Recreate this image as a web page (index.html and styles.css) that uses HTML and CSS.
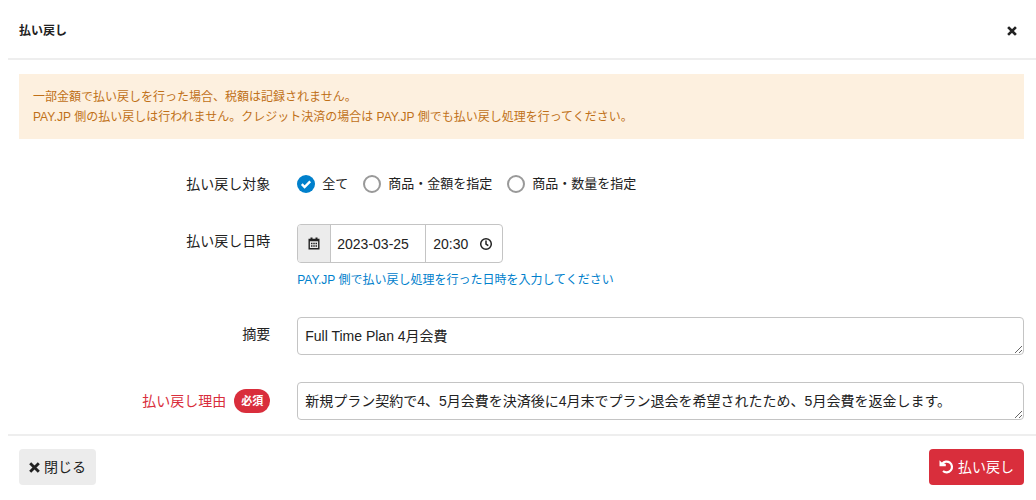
FILE: index.html
```html
<!DOCTYPE html>
<html lang="ja">
<head>
  <meta charset="UTF-8" />
  <meta name="viewport" content="width=device-width, initial-scale=1.0" />
  <title>払い戻し</title>
  <link rel="stylesheet" href="styles.css">
</head>
<body>
  <form class="modal">
    <header class="modal-header">
      <h1>払い戻し</h1>
      <button type="button" class="close" aria-label="閉じる">
        <svg width="10" height="10" viewBox="0 0 10 10"><path d="M2 2l6 6M8 2l-6 6" stroke="currentColor" stroke-width="2.6" stroke-linecap="square"/></svg>
      </button>
    </header>
    <main class="modal-body">
      <div class="alert">
        一部金額で払い戻しを行った場合、税額は記録されません。<br>
        PAY.JP 側の払い戻しは行われません。クレジット決済の場合は PAY.JP 側でも払い戻し処理を行ってください。
      </div>
      <div class="row" role="radiogroup" aria-labelledby="target-label">
        <span class="row-label" id="target-label">払い戻し対象</span>
        <div class="radios">
          <label class="radio"><input type="radio" name="target" value="all" checked>全て</label>
          <label class="radio"><input type="radio" name="target" value="amount">商品・金額を指定</label>
          <label class="radio"><input type="radio" name="target" value="quantity">商品・数量を指定</label>
        </div>
      </div>
      <div class="row">
        <label class="row-label" for="refund-date">払い戻し日時</label>
        <div>
          <div class="date-group">
            <span class="addon">
              <svg width="12" height="13" viewBox="0 0 12 13" fill="none" stroke="currentColor">
                <path d="M1 3.5h10M1.2 2.5h9.6v9.3H1.2z" stroke-width="1.4"/>
                <path d="M3.5 .5v2.5M8.5 .5v2.5" stroke-width="2"/>
                <path d="M3 6.5h6M3 9h6" stroke-width="1.4" stroke-dasharray="1.5 .75"/>
              </svg>
            </span>
            <input type="text" class="date" id="refund-date" name="date" value="2023-03-25">
            <span class="time-box">
              <input type="text" class="time" name="time" value="20:30" aria-label="時刻">
              <svg width="14" height="14" viewBox="0 0 14 14" fill="none" stroke="currentColor" stroke-width="1.5"><circle cx="7" cy="7" r="5.3"/><path d="M7 3.5V7l2.3 1.7"/></svg>
            </span>
          </div>
          <p class="help">PAY.JP 側で払い戻し処理を行った日時を入力してください</p>
        </div>
      </div>
      <div class="row">
        <label class="row-label" for="summary">摘要</label>
        <textarea id="summary" name="summary" rows="1">Full Time Plan 4月会費</textarea>
      </div>
      <div class="row">
        <label class="row-label required" for="reason">払い戻し理由 <span class="badge">必須</span></label>
        <textarea id="reason" name="reason" rows="1" required>新規プラン契約で4、5月会費を決済後に4月末でプラン退会を希望されたため、5月会費を返金します。</textarea>
      </div>
    </main>
    <footer class="modal-footer">
      <button type="button" class="btn">
        <svg width="11" height="11" viewBox="0 0 10 10"><path d="M2 2l6 6M8 2l-6 6" stroke="currentColor" stroke-width="2.6" stroke-linecap="square"/></svg>
        閉じる
      </button>
      <button type="submit" class="btn btn-danger">
        <svg width="15" height="14" viewBox="0 0 15 14" fill="none"><path d="M3.2 3.8A5.4 5.4 0 1 1 4 11" stroke="currentColor" stroke-width="2.2"/><path d="M.5 .3l2 1.9L6.8 4v2.2H.5z" fill="currentColor"/></svg>
        払い戻し
      </button>
    </footer>
  </form>
</body>
</html>
```
FILE: styles.css
```css
* {
  box-sizing: border-box;
}

body {
  margin: 0;
  background: #fff;
  color: #222;
  font-family: "Liberation Sans", "Noto Sans CJK JP", sans-serif;
  font-size: 14px;
  line-height: 20px;
}

input, textarea, button {
  font: inherit;
  color: inherit;
}

svg {
  display: block;
  flex: none;
}

.modal {
  margin-left: 8px;
}

.modal-header {
  display: flex;
  align-items: center;
  justify-content: space-between;
  height: 60px;
  padding: 4px 12px 0 11px;
  border-bottom: 2px solid #eee;
}

.modal-header h1 {
  margin: 0;
  font-size: 12px;
}

.close {
  padding: 7px;
  border: none;
  background: none;
  cursor: pointer;
}

.modal-body {
  display: flex;
  flex-direction: column;
  gap: 27px;
  padding: 14px 12px 14px 11px;
}

.alert {
  margin-bottom: 5px;
  padding: 13px 14px 12px;
  background: #fdf0df;
  color: #c07018;
  font-size: 12px;
}

.row {
  display: grid;
  grid-template-columns: 25% 1fr;
  column-gap: 27px;
}

.row-label {
  padding-top: 7px;
  text-align: right;
}

.required {
  display: flex;
  align-items: center;
  justify-content: flex-end;
  gap: 8px;
  padding-top: 0;
  color: #d92e3c;
}

.badge {
  padding: 2px 7px;
  border-radius: 12px;
  background: #d92e3c;
  color: #fff;
  font-size: 11px;
  font-weight: bold;
}

.radios {
  display: flex;
  flex-wrap: wrap;
  gap: 15px;
}

.radio {
  display: flex;
  align-items: center;
  gap: 7px;
  font-size: 13px;
}

.radio input {
  appearance: none;
  width: 18px;
  height: 18px;
  margin: 0;
  border: 2px solid #999;
  border-radius: 50%;
}

.radio input:checked {
  border: none;
  background: #0080cc url("data:image/svg+xml,%3Csvg xmlns='http://www.w3.org/2000/svg' viewBox='0 0 18 18'%3E%3Cpath d='M4.8 9.2l2.8 2.8 5.6-5.6' fill='none' stroke='white' stroke-width='2.4'/%3E%3C/svg%3E");
}

[role="radiogroup"] .row-label {
  padding: 3px 0;
}

.date-group {
  display: inline-flex;
  height: 39px;
  border: 1px solid #c4c4c4;
  border-radius: 4px;
  overflow: hidden;
  vertical-align: top;
}

.addon {
  display: flex;
  align-items: center;
  justify-content: center;
  width: 32px;
  background: #ececec;
}

.date, .time {
  border: none;
  background: none;
  outline: none;
}

.date {
  width: 95px;
  padding: 0 6px;
  border-left: 1px solid #c4c4c4;
}

.time-box {
  display: flex;
  align-items: center;
  padding-right: 9px;
  border-left: 1px solid #c4c4c4;
}

.time {
  width: 53px;
  padding: 0 0 0 7px;
}

.help {
  margin: 7px 0 0;
  color: #0080cc;
  font-size: 12px;
}

textarea {
  display: block;
  width: 100%;
  height: 38px;
  padding: 8px 7px;
  border: 1px solid #c4c4c4;
  border-radius: 4px;
  resize: vertical;
  overflow: hidden;
}

.modal-footer {
  display: flex;
  justify-content: space-between;
  padding: 13px 12px 13px 11px;
  border-top: 2px solid #eee;
}

.btn {
  display: flex;
  align-items: center;
  gap: 4px;
  height: 36px;
  padding: 0 10px;
  border: none;
  border-radius: 4px;
  background: #ececec;
  cursor: pointer;
}

.btn-danger {
  background: #d92e3c;
  color: #fff;
}
```
